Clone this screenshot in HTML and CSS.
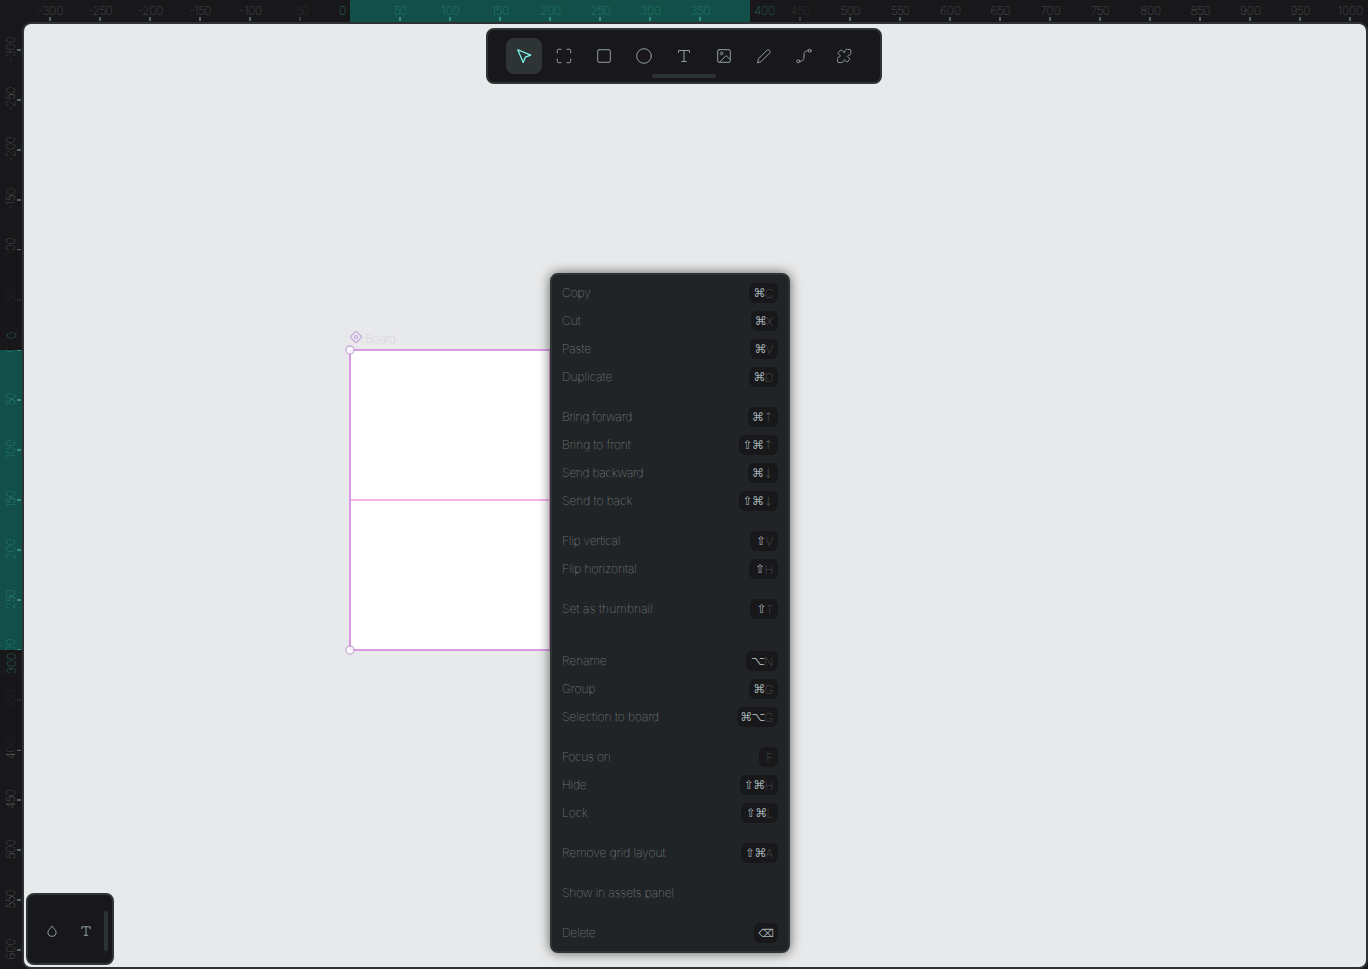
FILE: index.html
```html
<!DOCTYPE html>
<html lang="en">
<head>
<meta charset="utf-8">
<title>Board</title>
<link rel="stylesheet" href="styles.css">
</head>
<body>
<main class="workspace">
  <svg class="ruler ruler-top" id="ruler-top" width="1368" height="22"></svg>
  <svg class="ruler ruler-left" id="ruler-left" width="22" height="947"></svg>
  <section class="viewport"></section>
</main>

<svg class="board" width="420" height="340" viewBox="340 325 420 340">
  <g fill="none" stroke="#c5a3df" stroke-width="1.2"><path d="M350.9 336.2 355.2 331.9Q356 331.200 356.800 331.900L361.100 336.200Q361.800 337 361.100 337.800L356.800 342.100Q356 342.800 355.200 342.100L350.900 337.800Q350.200 337 350.900 336.200Z"/><circle cx="356" cy="337" r="1.500"/></g>
  <text class="board-name" x="365.500" y="342.500" textLength="30.500">Board</text>
  <rect x="350" y="350" width="400" height="300" fill="#fff"/>
  <path d="M350 500H750M550 350V650" stroke="#f5b4e4" stroke-width="2"/>
  <rect x="350" y="350" width="400" height="300" fill="none" stroke="#d79be2" stroke-width="2"/>
  <g fill="#fff" stroke="#c7a8dc" stroke-width="1.300"><circle cx="350" cy="350" r="4"/><circle cx="350" cy="650" r="4"/></g>
  <path d="M350.500 353V350.500H353M350.500 647V649.500H353" fill="none" stroke="#f8d5f0"/>
</svg>

<nav class="toolbar">
  <div class="tools">
    <button class="tool active"><svg viewBox="0 0 16 16"><path d="m1.800 1.800 12.900 5.300-5.300 2-2.200 5.400Z"/></svg></button>
    <button class="tool"><svg viewBox="0 0 16 16"><path d="M1.300 5V2.300q0-1 1-1H5M11 1.300h2.700q1 0 1 1V5M14.700 11v2.700q0 1-1 1H11M5 14.700H2.300q-1 0-1-1V11"/></svg></button>
    <button class="tool"><svg viewBox="0 0 16 16"><rect x="1.700" y="1.700" width="12.600" height="12.600" rx="1.300"/></svg></button>
    <button class="tool"><svg viewBox="0 0 16 16"><circle cx="8" cy="8" r="7.300"/></svg></button>
    <button class="tool"><svg viewBox="0 0 16 16"><path d="M2.500 4.500v-2h11v2M8 2.500v11M5.700 13.500h4.600"/></svg></button>
    <button class="tool"><svg viewBox="0 0 16 16"><rect x="1.700" y="1.700" width="12.600" height="12.600" rx="1.300"/><circle cx="5.500" cy="5.500" r="1.300"/><path d="m3.700 14.200 6.300-6.600 4.300 4"/></svg></button>
    <button class="tool"><svg viewBox="0 0 16 16"><path d="m1.600 14.400.9-3.700 8.700-8.700q1-.8 2.200.200t.6 2.400l-8.700 8.800Z"/></svg></button>
    <button class="tool"><svg viewBox="0 0 16 16"><circle cx="2.300" cy="13.300" r="1.500"/><circle cx="13.700" cy="2.700" r="1.500"/><path d="M3.800 13.300c3.800 0 4.200-2 4.200-5.300 0-3.500.4-5.300 4.200-5.300"/></svg></button>
    <button class="tool"><svg viewBox="0 0 16 16"><path d="M8.300 4.200c.900-.4.700-1.300 1.100-2 .500-.9 1.500-1.300 2.300-.700h2.100q1 0 1 1v2.200c.300 1-.2 1.700-1 2.200-.7.300-1.700.2-2 .900-.300.700.200 1.100.8 1.700.7.700 1.300 1.300.7 2.200l-1.500 1.900q-.7.700-1.500.100c-.500-.4-.7-1.700-1.700-1.700s-1 1.100-1.400 1.700c-.500.900-1.400 1.200-2.300.8H2.700q-1.200 0-1.200-1.200v-1.800c-.300-1 .100-1.800 1-2.300.7-.3 1.700-.3 1.800-1.200 0-.8-.9-1.100-1.600-1.600-.8-.6-.8-1.400-.1-2.100l1.700-1.900q.8-.7 1.600.1c.7.700 1.400 2.100 2.400 1.700Z"/></svg></button>
  </div>
  <div class="grip"></div>
</nav>

<aside class="palette">
  <svg viewBox="0 0 12 12"><path d="M6 1.300C4.500 3.500 1.900 4.900 1.900 7.200a4.100 4.100 0 0 0 8.200 0C10.100 4.900 7.500 3.500 6 1.300Z"/></svg>
  <svg viewBox="0 0 12 12"><path d="M1.800 3.800V1.800h8.400v2M6 1.800v8.500M4.200 10.300h3.600"/></svg>
  <div class="palette-grip"></div>
</aside>

<ul class="menu">
  <li><span>Copy</span><kbd class="k29">⌘<i>C</i></kbd></li>
  <li><span>Cut</span><kbd class="k27">⌘<i>X</i></kbd></li>
  <li><span>Paste</span><kbd class="k28">⌘<i>V</i></kbd></li>
  <li><span>Duplicate</span><kbd class="k29">⌘<i>D</i></kbd></li>
  <li class="sep"></li>
  <li><span class="tight">Bring forward</span><kbd class="k30">⌘<i>↑</i></kbd></li>
  <li><span>Bring to front</span><kbd class="k39">⇧⌘<i>↑</i></kbd></li>
  <li><span class="tight">Send backward</span><kbd class="k30">⌘<i>↓</i></kbd></li>
  <li><span>Send to back</span><kbd class="k39">⇧⌘<i>↓</i></kbd></li>
  <li class="sep"></li>
  <li><span class="tight">Flip vertical</span><kbd class="k28">⇧<i>V</i></kbd></li>
  <li><span>Flip horizontal</span><kbd class="k29">⇧<i>H</i></kbd></li>
  <li class="sep"></li>
  <li><span class="loose">Set as thumbnail</span><kbd class="k28">⇧<i>T</i></kbd></li>
  <li class="sep"></li>
  <li class="sep"></li>
  <li><span>Rename</span><kbd class="k32">⌥<i>N</i></kbd></li>
  <li><span>Group</span><kbd class="k29">⌘<i>G</i></kbd></li>
  <li><span>Selection to board</span><kbd class="k41">⌘⌥<i>G</i></kbd></li>
  <li class="sep"></li>
  <li><span class="tight">Focus on</span><kbd class="k19"><i>F</i></kbd></li>
  <li><span class="tight">Hide</span><kbd class="k38">⇧⌘<i>H</i></kbd></li>
  <li><span>Lock</span><kbd class="k37">⇧⌘<i>L</i></kbd></li>
  <li class="sep"></li>
  <li><span>Remove grid layout</span><kbd class="k37">⇧⌘<i>A</i></kbd></li>
  <li class="sep"></li>
  <li><span class="panel">Show in assets panel</span></li>
  <li class="sep"></li>
  <li><span class="tight">Delete</span><kbd class="k24">⌫</kbd></li>
</ul>
<script src="rulers.js"></script>
</body>
</html>
```
FILE: styles.css
```css
* { box-sizing: border-box; }
body {
  margin: 0;
  width: 1368px;
  height: 969px;
  overflow: hidden;
  background: #18181a;
  font-family: Inter, "Liberation Sans", sans-serif;
  font-size: 12px;
  font-weight: 100;
}
.workspace {
  display: grid;
  grid-template: 22px 947px / 22px 1346px;
  background: #18181a;
}
.ruler { display: block; font-size: 12px; }
.ruler-top { grid-column: 1 / 3; }
.viewport {
  background: #e8e9ea;
  border: 2px solid #2e3236;
  border-radius: 9px;
  height: 947px;
  width: 1346px;
}
.board { position: absolute; left: 340px; top: 325px; }
.board-name { fill: #d5b5e1; font-size: 12px; font-weight: 100; }
.toolbar {
  position: absolute;
  left: 486px;
  top: 28px;
  width: 396px;
  height: 56px;
  padding: 8px 18px 4px;
  border: 2px solid #2e3434;
  border-radius: 8px;
  background: #18181a;
}
.tools { display: flex; gap: 4px; }
.tool {
  width: 36px;
  height: 36px;
  padding: 10px;
  border: 0;
  border-radius: 8px;
  background: none;
}
.tool.active { background: #2e3434; }
.tool svg, .palette svg {
  display: block;
  fill: none;
  stroke: #8f9da3;
  stroke-width: 1;
  stroke-linejoin: round;
  stroke-linecap: round;
}
.tool svg { width: 16px; height: 16px; }
.tool.active svg { stroke: #7efff5; stroke-width: 1.2; }
.grip {
  width: 64px;
  height: 4px;
  margin: 0 auto;
  border-radius: 2px;
  background: #2e3434;
}
.palette {
  position: absolute;
  left: 26px;
  top: 893px;
  width: 88px;
  height: 72px;
  display: flex;
  align-items: center;
  padding: 4px 4px 0 18px;
  border: 2px solid #2e3434;
  border-radius: 8px;
  background: #18181a;
}
.palette svg { width: 12px; height: 12px; margin-right: 22px; }
.palette svg + svg { margin-right: 12px; }
.palette-grip { width: 4px; height: 40px; border-radius: 2px; background: #2e3434; }
.menu {
  position: absolute;
  left: 550px;
  top: 273px;
  width: 240px;
  height: 680px;
  margin: 0;
  padding: 4px 10px;
  list-style: none;
  border: 2px solid #2e3434;
  border-radius: 8px;
  background: #212426;
  box-shadow: 0 0 12px rgba(0, 0, 0, .6);
  color: #a9b0b3;
}
.menu li {
  display: flex;
  align-items: center;
  justify-content: space-between;
  height: 28px;
}
.menu span { padding-bottom: 1.5px; }
.menu .tight { letter-spacing: -.2px; }
.menu .loose { letter-spacing: .14px; }
.menu .panel { letter-spacing: -.1px; }
.menu .sep { height: 12px; }
kbd {
  display: flex;
  align-items: center;
  justify-content: flex-end;
  height: 20px;
  padding-right: 5px;
  border-radius: 6px;
  background: #18181a;
  color: #a3b0b5;
  font: 400 12px "DejaVu Sans", sans-serif;
  letter-spacing: -.8px;
}
kbd i { font: 100 12px Inter, sans-serif; color: #787f82; letter-spacing: -.3px; }
.k19 { width: 19px; }
.k24 { width: 24px; font-size: 11px; }
.k27 { width: 27px; }
.k28 { width: 28px; }
.k29 { width: 29px; }
.k30 { width: 30px; }
.k32 { width: 32px; }
.k37 { width: 37px; }
.k38 { width: 38px; }
.k39 { width: 39px; }
.k41 { width: 41px; }
.k30 i, .k39 i { font-family: "Noto Sans CJK SC", Inter, sans-serif; font-size: 10px; line-height: 12px; }
```
FILE: rulers.js
```js
const width = n => [...String(n)].reduce((w, c) => w + (c === '-' ? 4.5 : c === '1' ? 4.8 : c === '7' ? 6 : c === '5' ? 5.9 : 7), 0);
const label = (n, x, y, color, opacity, extra = '') =>
  `<text x="${x}" y="${y}" text-anchor="middle" fill="${color}" opacity="${opacity}" textLength="${width(n)}" ${extra}>${n}</text>`;
const gray = '#757b7f', green = '#35a599', tick = '#596063';

let topMarks = '<rect x="350" width="400" height="22" fill="#124f48"/>';
for (let v = -300; v <= 1000; v += 50) {
  const x = v + 350;
  if (v === 0 || v === 400) continue;
  const inside = v > 0 && v < 400, dim = v === -50 || v === 450;
  topMarks += label(v, x + .5, 14.5, inside ? green : gray, dim ? .45 : 1);
  topMarks += `<rect x="${x - 1}" y="17" width="2" height="4" fill="${inside ? '#398c82' : tick}" opacity="${dim ? .5 : 1}"/>`;
}
topMarks += label(0, 342.5, 14.5, green, 1) + label(400, 764.5, 14.5, green, 1);
document.getElementById('ruler-top').innerHTML = topMarks;

let left = '<g transform="translate(0 -22)"><rect y="350" width="22" height="300" fill="#124f48"/>';
for (let v = -300; v <= 600; v += 50) {
  const y = v + 350;
  const inside = v >= 0 && v <= 300;
  left += label(v, 14.5, y - 1, inside ? green : gray, 1, `transform="rotate(-90 14.5 ${y - 1})"`);
  left += `<rect x="17" y="${y - 1}" width="4" height="2" fill="${inside ? '#398c82' : tick}"/>`;
}
left += '<rect y="250" width="22" height="100" fill="#18181a" opacity=".8"/><rect y="650" width="22" height="100" fill="#18181a" opacity=".8"/>';
left += '<rect y="340" width="22" height="10" fill="#18181a"/><rect y="650" width="22" height="25" fill="#18181a"/>';
left += label(0, 15.5, 335.5, green, 1, 'transform="rotate(-90 15.5 335.5)"');
left += label(300, 15.5, 663.5, green, 1, 'transform="rotate(-90 15.5 663.5)"') + '</g>';
document.getElementById('ruler-left').innerHTML = left;
```
